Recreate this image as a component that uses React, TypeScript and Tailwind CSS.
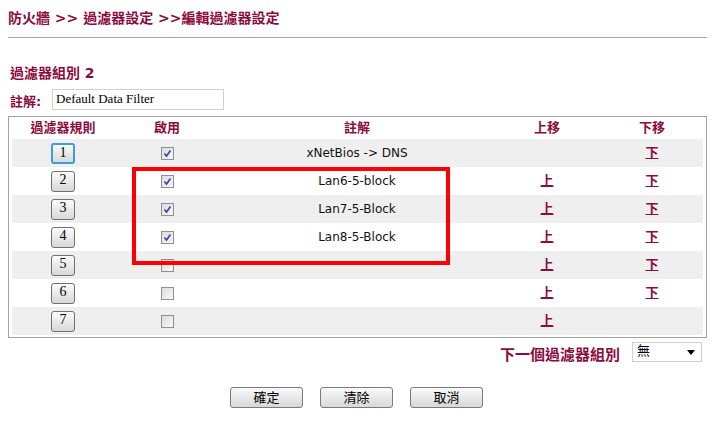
import React from 'react'

const MAROON = 'text-[#8a0b3d]'

interface Rule {
  no: number
  enabled: boolean
  note: string
  up: boolean
  down: boolean
}

const rules: Rule[] = [
  { no: 1, enabled: true, note: 'xNetBios -> DNS', up: false, down: true },
  { no: 2, enabled: true, note: 'Lan6-5-block', up: true, down: true },
  { no: 3, enabled: true, note: 'Lan7-5-Block', up: true, down: true },
  { no: 4, enabled: true, note: 'Lan8-5-Block', up: true, down: true },
  { no: 5, enabled: false, note: '', up: true, down: true },
  { no: 6, enabled: false, note: '', up: true, down: true },
  { no: 7, enabled: false, note: '', up: true, down: false },
]

const Checkbox: React.FC<{ checked: boolean }> = ({ checked }) => (
  <span className="inline-flex w-[13px] h-[13px] border border-[#8f8f8f] bg-gradient-to-br from-[#dcdcdc] to-[#f8f8f8] items-center justify-center">
    {checked && (
      <svg width="9" height="9" viewBox="0 0 9 9">
        <path d="M1.5 4.5 L3.5 7 L7.5 1.5" fill="none" stroke="#3b4ea8" strokeWidth="1.8" />
      </svg>
    )}
  </span>
)

const NumButton: React.FC<{ n: number; focused?: boolean }> = ({ n, focused }) => (
  <button
    className={`w-[24px] h-[21px] rounded-[3px] bg-gradient-to-b from-[#fbfbfb] to-[#d9d9d9] text-[14px] leading-[14px] text-black font-['Liberation_Serif',serif] flex justify-center pt-[1px] ${
      focused ? 'border-2 border-[#3d9fd8]' : 'border border-[#707070]'
    }`}
  >
    {n}
  </button>
)

export default function App() {
  return (
    <div className="relative w-[727px] h-[445px] bg-white overflow-hidden font-['DejaVu_Sans','Noto_Sans_CJK_TC',sans-serif]">
      <div className="px-[8px] pt-[8px]">
        <div className={`h-[20px] leading-[20px] text-[14px] font-bold ${MAROON}`}>
          防火牆 &gt;&gt; 過濾器設定 &gt;&gt;編輯過濾器設定
        </div>
        <div className="mt-[9px] h-px w-[699px] bg-[#a6a6a6]" />

        <div className={`mt-[25px] h-[20px] leading-[20px] text-[14px] font-bold pl-[2px] ${MAROON}`}>
          過濾器組別 2
        </div>

        <div className="mt-[6px] flex items-center h-[21px]">
          <span className={`w-[44px] pl-[2px] pt-[4px] text-[13px] font-bold ${MAROON}`}>註解:</span>
          <div className="w-[172px] h-[21px] border border-[#d0d0d0] px-[3px] text-[13px] leading-[18px] text-black font-['Liberation_Serif',serif]">
            Default Data Filter
          </div>
        </div>

        <div className="mt-[6px] w-[699px] border border-[#a3a3a3] px-[3px] pb-[2px]">
          <div className={`grid grid-cols-[102px_106px_274px_106px_104px] h-[22px] items-center text-center text-[13px] font-bold ${MAROON}`}>
            <span>過濾器規則</span>
            <span>啟用</span>
            <span>註解</span>
            <span>上移</span>
            <span>下移</span>
          </div>
          {rules.map((r, i) => (
            <div
              key={r.no}
              className={`grid grid-cols-[102px_106px_274px_106px_104px] h-[28px] items-center text-center ${
                i % 2 === 0 ? 'bg-[#efefef]' : 'bg-white'
              }`}
            >
              <div className="flex justify-center">
                <NumButton n={r.no} focused={r.no === 1} />
              </div>
              <div className="flex justify-center">
                <Checkbox checked={r.enabled} />
              </div>
              <span className="text-[12px] text-[#111]">{r.note}</span>
              <span className={`text-[13px] font-bold underline ${MAROON}`}>{r.up ? '上' : ''}</span>
              <span className={`text-[13px] font-bold underline ${MAROON}`}>{r.down ? '下' : ''}</span>
            </div>
          ))}
        </div>

        <div className="mt-[4px] flex items-center justify-end pr-[17px] h-[20px]">
          <span className={`text-[15px] font-bold mt-[6px] ${MAROON}`}>下一個過濾器組別</span>
          <div className="ml-[12px] w-[70px] h-[20px] border border-[#cfcfcf] flex items-start justify-between pl-[4px] pr-[6px]">
            <span className="text-[13px] leading-[15px] text-black">無</span>
            <svg width="8" height="5" viewBox="0 0 8 5" className="mt-[7px]">
              <path d="M0 0 H8 L4 5 Z" fill="#000" />
            </svg>
          </div>
        </div>

        <div className="mt-[25px] flex gap-[17px] pl-[222px]">
          {['確定', '清除', '取消'].map((t) => (
            <button
              key={t}
              className="w-[73px] h-[21px] rounded-[3px] border border-[#7a7a7a] bg-gradient-to-b from-[#fafafa] to-[#d8d8d8] text-[13px] leading-[17px] text-black"
            >
              {t}
            </button>
          ))}
        </div>
      </div>

      <div className="absolute left-[132px] top-[167px] w-[318px] h-[98px] border-[4px] border-[#ff0000]" />
    </div>
  )
}
